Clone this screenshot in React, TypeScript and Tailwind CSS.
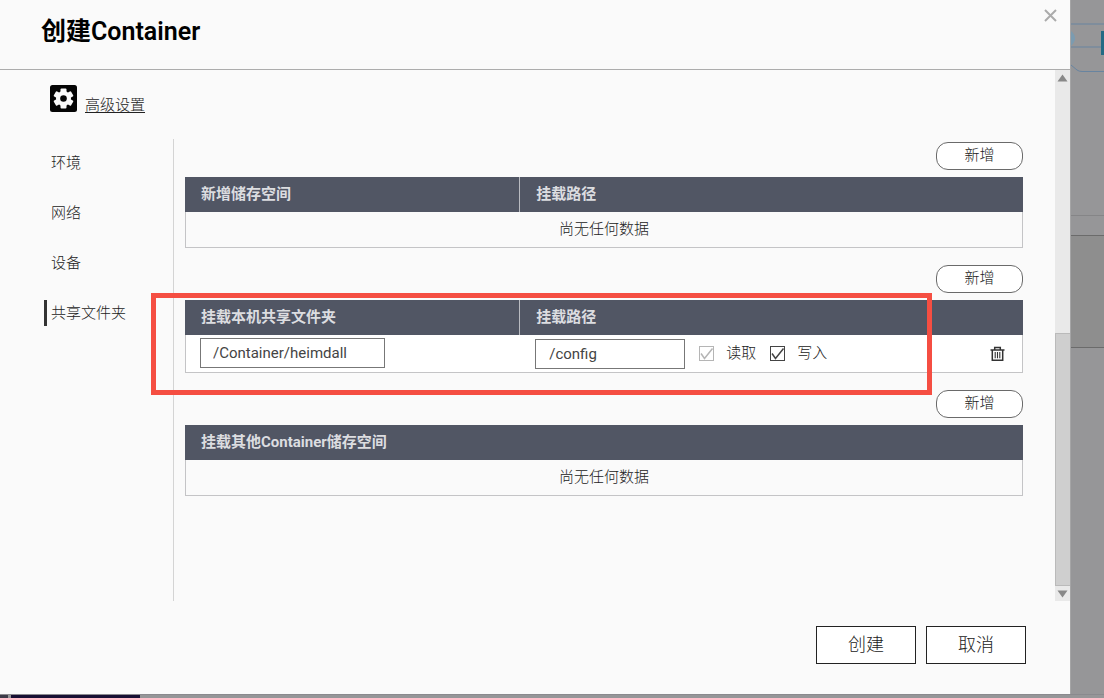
import { useState } from 'react';
import type { ReactNode } from 'react';

const NAV_ITEMS = ['环境', '网络', '设备', '共享文件夹'];

function AddButton() {
  return (
    <button
      type="button"
      className="h-7 w-[87px] self-end rounded-xl border border-[#6a6a6a] bg-white pb-0.5 text-[15px] leading-5 hover:bg-gray-100"
    >
      新增
    </button>
  );
}

function Section({ heads, children, highlighted }: { heads: string[]; children: ReactNode; highlighted?: boolean }) {
  return (
    <section className="relative flex flex-col gap-[7px]">
      <AddButton />
      <table className="w-full table-fixed border-separate border-spacing-0 text-[15px] leading-5">
        <thead>
          <tr className="h-[35px] bg-[#515664] text-left text-[#dcdde0]">
            {heads.map((head, i) => (
              <th
                key={head}
                className={
                  i < heads.length - 1
                    ? 'w-2/5 border-r border-[#b9bbc1] px-4 pb-0.5 pt-0 font-bold'
                    : 'px-4 pb-0.5 pt-0 font-bold'
                }
              >
                {head}
              </th>
            ))}
          </tr>
        </thead>
        <tbody>{children}</tbody>
      </table>
      {highlighted && (
        <div className="pointer-events-none absolute -bottom-[22px] -left-[34px] right-[91px] top-7 border-[5px] border-[#f54e42]" />
      )}
    </section>
  );
}

function EmptyRow({ span }: { span: number }) {
  return (
    <tr className="h-9">
      <td colSpan={span} className="border border-t-0 border-[#c4c4c6] px-0 pb-0.5 pt-0 text-center">
        尚无任何数据
      </td>
    </tr>
  );
}

function CheckField({ label, checked, disabled, onChange }: {
  label: string;
  checked: boolean;
  disabled?: boolean;
  onChange?: (v: boolean) => void;
}) {
  return (
    <label className={disabled ? 'flex items-center gap-3 text-[#b5b5b5]' : 'flex items-center gap-3 text-[#444]'}>
      <span className="relative block size-[15px]">
        <input
          type="checkbox"
          checked={checked}
          disabled={disabled}
          onChange={(e) => onChange?.(e.target.checked)}
          className="block size-full appearance-none border border-current bg-white"
        />
        {checked && (
          <svg className="pointer-events-none absolute inset-0 size-full" viewBox="0 0 15 15" fill="none" stroke="currentColor" strokeWidth="1.5">
            <path d="M2 7.500 5.500 12.500 13.500 2.500" />
          </svg>
        )}
      </span>
      <span className="pb-0.5 text-[#222]">{label}</span>
    </label>
  );
}

function GearIcon() {
  return (
    <svg className="size-[27px]" viewBox="0 0 27 27">
      <rect width="27" height="27" rx="2.5" fill="#050505" />
      <g fill="#fafafa">
        <circle cx="13.5" cy="13.5" r="7.5" />
        <rect x="10.5" y="3.5" width="6" height="20" rx="1" />
        <rect x="10.5" y="3.5" width="6" height="20" rx="1" transform="rotate(60 13.5 13.5)" />
        <rect x="10.5" y="3.5" width="6" height="20" rx="1" transform="rotate(120 13.5 13.5)" />
      </g>
      <circle cx="13.5" cy="13.5" r="3.3" fill="#050505" />
    </svg>
  );
}

function TrashIcon() {
  return (
    <svg className="size-[15px]" viewBox="0 0 15 15" fill="none" stroke="#333" strokeWidth="1.5">
      <path d="M.5 4h14M4.700 3.500V1.500h5.600v2M2.300 4v10.200h10.400V4" />
      <path d="M5.200 6v6.200M7.500 6v6.200M9.800 6v6.200" strokeWidth="1.1" />
    </svg>
  );
}

function ScrollTrack() {
  return (
    <div className="flex w-[15px] shrink-0 flex-col bg-[#e9e9e9]">
      <svg className="size-[15px]" viewBox="0 0 15 15" fill="#888">
        <path d="M2.5 11.5 7.5 4.5l5 7z" />
      </svg>
      <div className="flex-1" />
      <div className="h-[253px] border border-r-0 border-[#bababa] bg-[#cfcfcf]" />
      <svg className="size-[15px]" viewBox="0 0 15 15" fill="#888">
        <path d="M2.5 4.5 7.5 11.5l5-7z" />
      </svg>
    </div>
  );
}

// Sliver of the dimmed page that shows beside the dialog
function Backdrop() {
  return (
    <div className="flex w-[34px] shrink-0 flex-col border-l border-[#a5a5a6] bg-[#969698]">
      <svg className="h-[215px] w-full" viewBox="0 0 33 215" fill="none">
        <path d="M0 24h33M0 47h33M0 65l6 5q2 1.500 5 1.500h22" stroke="#6884a0" />
        <path d="M0 31q8 7 0 15z" fill="#7b9bb0" />
        <path d="M30 31h3v24h-3z" fill="#246a84" />
      </svg>
      <div className="h-5 border-t border-[#858587]" />
      <div className="h-[113px] border-y border-[#6b6b6b] bg-[#8e8e8e]" />
    </div>
  );
}

export default function App() {
  const [hostPath, setHostPath] = useState('/Container/heimdall');
  const [mountPath, setMountPath] = useState('/config');
  const [writable, setWritable] = useState(true);
  const [active, setActive] = useState('共享文件夹');

  return (
    <div className="flex min-h-screen flex-col bg-[#969698] font-['Roboto','Noto_Sans_CJK_SC',sans-serif] text-[#222]">
      <div className="flex flex-1">
        <main className="flex min-w-0 flex-1 flex-col bg-[#fafafa]">
          <header className="flex h-[70px] items-start justify-between border-b border-[#acacac] pl-[41px] pr-3">
            <h1 className="pt-4 text-[25px] font-semibold leading-8 text-black">创建Container</h1>
            <button type="button" aria-label="关闭" className="mt-2 p-px">
              <svg className="size-[13px]" viewBox="0 0 13 13" fill="none" stroke="#ababab" strokeWidth="2">
                <path d="M1 1l11 11M12 1 1 12" />
              </svg>
            </button>
          </header>

          <div className="flex flex-1">
            <div className="flex min-w-0 flex-1 flex-col pr-8 pt-[15px]">
              <div className="flex h-[54px] items-start gap-2 pl-[50px]">
                <GearIcon />
                <a href="#advanced" className="mt-2.5 text-[15px] font-light leading-5 underline underline-offset-2">
                  高级设置
                </a>
              </div>

              <div className="flex flex-1">
                <nav className="flex w-[173px] shrink-0 flex-col items-start gap-6 pl-11 pt-[11px] text-[15px] font-light">
                  {NAV_ITEMS.map((item) => (
                    <button
                      key={item}
                      type="button"
                      onClick={() => setActive(item)}
                      className={
                        item === active
                          ? 'h-[26px] border-l-[3px] border-[#333] pl-1 leading-5'
                          : 'h-[26px] border-l-[3px] border-transparent pl-1 leading-5'
                      }
                    >
                      {item}
                    </button>
                  ))}
                </nav>

                <div className="flex min-w-0 flex-1 flex-col gap-[17px] border-l border-[#d4d4d4] pl-[11px] pt-[3px] font-light">
                  <Section heads={['新增储存空间', '挂载路径']}>
                    <EmptyRow span={2} />
                  </Section>

                  <Section heads={['挂载本机共享文件夹', '挂载路径']} highlighted>
                    <tr className="h-[38px] bg-white">
                      <td className="border-b border-l border-[#c4c4c6] pb-0.5 pl-3.5 pt-0">
                        <input
                          aria-label="挂载本机共享文件夹"
                          value={hostPath}
                          onChange={(e) => setHostPath(e.target.value)}
                          className="block h-[30px] w-[185px] border border-[#777] bg-white px-3 font-normal text-[#444]"
                        />
                      </td>
                      <td className="border-b border-r border-[#c4c4c6] py-0 pl-[15px] pr-[17px]">
                        <div className="flex items-center">
                          <input
                            aria-label="挂载路径"
                            value={mountPath}
                            onChange={(e) => setMountPath(e.target.value)}
                            className="mr-3.5 block h-[30px] w-[150px] border border-[#777] bg-white px-[13px] font-normal text-[#444]"
                          />
                          <div className="flex gap-3.5">
                            <CheckField label="读取" checked disabled />
                            <CheckField label="写入" checked={writable} onChange={setWritable} />
                          </div>
                          <button type="button" aria-label="删除" className="ml-auto">
                            <TrashIcon />
                          </button>
                        </div>
                      </td>
                    </tr>
                  </Section>

                  <Section heads={['挂载其他Container储存空间']}>
                    <EmptyRow span={1} />
                  </Section>
                </div>
              </div>
            </div>
            <ScrollTrack />
          </div>

          <footer className="flex h-[93px] items-start justify-end gap-2.5 pr-11 pt-[25px] text-lg font-light">
            <button type="button" className="h-[38px] w-[100px] border border-[#222] bg-white leading-6">
              创建
            </button>
            <button type="button" className="h-[38px] w-[100px] border border-[#222] bg-white leading-6">
              取消
            </button>
          </footer>
        </main>
        <Backdrop />
      </div>
      <div className="flex h-1 gap-[3px] border-t border-[#8a8a8e]">
        <div className="w-2 bg-[#3c3a48]" />
        <div className="w-[129px] bg-[#170f33]" />
      </div>
    </div>
  );
}
